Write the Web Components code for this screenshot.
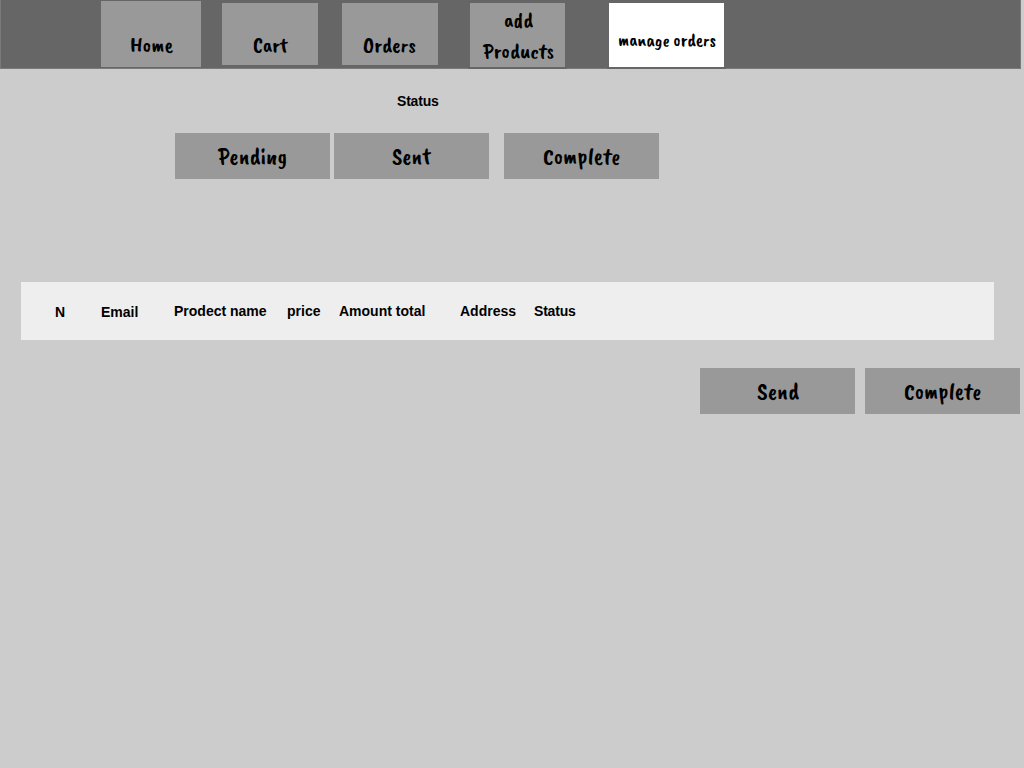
<!DOCTYPE html>
<html lang="en">
<head>
<meta charset="utf-8">
<title>Manage orders</title>
<style>
html,body{margin:0;height:100%;background:#ccc;overflow:hidden}
</style>
</head>
<body>
<orders-page></orders-page>
<script>
/* Brush-style caption fitted to a given width on a fixed baseline. */
class BrushLabel extends HTMLElement {
  connectedCallback() {
    const w = this.getAttribute('width'), size = this.getAttribute('size');
    const root = this.attachShadow({mode: 'open'});
    root.innerHTML = `<style>
      :host{display:block;flex:none}
      svg{display:block;overflow:visible}
      text{font-family:"Caveat Brush",Lato,sans-serif;font-weight:400;fill:#000}
    </style>
    <svg width="${w}" height="24"><text x="0" y="17" font-size="${size}" textLength="${w}" lengthAdjust="spacingAndGlyphs"></text></svg>`;
    root.querySelector('text').textContent = this.getAttribute('text');
  }
}
customElements.define('brush-label', BrushLabel);

class NavTab extends HTMLElement {
  connectedCallback() {
    this.attachShadow({mode: 'open'}).innerHTML = `<style>
      :host{display:flex;flex:none;flex-direction:column;align-items:flex-start;box-sizing:border-box;
        background:#999;cursor:pointer}
      :host([framed]){box-shadow:0 0 0 2px #666}
      :host([active]){background:#fff}
    </style><slot></slot>`;
  }
}
customElements.define('nav-tab', NavTab);

class ActionButton extends HTMLElement {
  connectedCallback() {
    this.attachShadow({mode: 'open'}).innerHTML = `<style>
      :host{display:flex;flex:none;box-sizing:border-box;width:155px;height:46px;padding-top:14px;
        background:#999;cursor:pointer}
    </style><slot></slot>`;
  }
}
customElements.define('action-button', ActionButton);

class TopNav extends HTMLElement {
  connectedCallback() {
    this.attachShadow({mode: 'open'}).innerHTML = `<style>
      :host{display:flex;align-items:flex-start;box-sizing:border-box;width:1021px;height:69px;
        background:#666;border:solid #7a7a7a;border-width:0 1px 1px}
      .home{margin:1px 0 0 100px;width:100px;height:66px;padding:34px 0 0 29px}
      .cart{margin:3px 0 0 21px;width:96px;height:62px;padding:32px 0 0 31px}
      .orders{margin:3px 0 0 24px;width:96px;height:62px;padding:32px 0 0 21px}
      .add{margin:3px 0 0 32px;width:95px;height:64px;padding:7px 0 0 13px;gap:7px}
      .add brush-label:first-child{margin-left:21px}
      .manage{margin:3px 0 0 44px;width:115px;height:64px;padding:26px 0 0 9px}
    </style>
    <nav-tab class="home"><brush-label text="Home" width="43" size="21"></brush-label></nav-tab>
    <nav-tab class="cart"><brush-label text="Cart" width="35" size="21"></brush-label></nav-tab>
    <nav-tab class="orders"><brush-label text="Orders" width="53" size="21"></brush-label></nav-tab>
    <nav-tab class="add" framed><brush-label text="add" width="29" size="21"></brush-label><brush-label text="Products" width="71" size="21"></brush-label></nav-tab>
    <nav-tab class="manage" framed active><brush-label text="manage orders" width="98" size="18"></brush-label></nav-tab>`;
  }
}
customElements.define('top-nav', TopNav);

class OrdersHeader extends HTMLElement {
  connectedCallback() {
    this.attachShadow({mode: 'open'}).innerHTML = `<style>
      :host{display:grid;grid-template-columns:46px 73px 113px 52px 121px 74px 1fr;box-sizing:border-box;
        width:973px;height:58px;padding:21px 0 0 34px;background:#eee;
        font:bold 14px/16px "Liberation Sans",Arial,sans-serif;color:#000;white-space:nowrap}
      .low{padding-top:1px}
      .tight{letter-spacing:-.2px}
    </style>
    <span class="low">N</span><span class="low">Email</span><span>Prodect name</span><span>price</span><span>Amount total</span><span>Address</span><span class="tight">Status</span>`;
  }
}
customElements.define('orders-header', OrdersHeader);

class OrdersPage extends HTMLElement {
  connectedCallback() {
    this.attachShadow({mode: 'open'}).innerHTML = `<style>
      :host{display:block;width:1024px;height:768px;background:#ccc}
      h2{margin:24px 0 0 397px;height:16px;font:bold 14px/16px "Liberation Sans",Arial,sans-serif;letter-spacing:-.2px;color:#000}
      .filters{display:flex;margin:24px 0 0 175px}
      .filters :nth-child(2){margin-left:4px}
      .filters :nth-child(3){margin-left:15px}
      orders-header{margin:103px 0 0 21px}
      .actions{display:flex;gap:10px;margin:28px 0 0 700px}
    </style>
    <top-nav></top-nav>
    <h2>Status</h2>
    <div class="filters">
      <action-button style="padding-left:43px"><brush-label text="Pending" width="69" size="24"></brush-label></action-button>
      <action-button style="padding-left:58px"><brush-label text="Sent" width="39" size="24"></brush-label></action-button>
      <action-button style="padding-left:39px"><brush-label text="Complete" width="77" size="24"></brush-label></action-button>
    </div>
    <orders-header></orders-header>
    <div class="actions">
      <action-button style="padding-left:57px"><brush-label text="Send" width="42" size="24"></brush-label></action-button>
      <action-button style="padding-left:39px"><brush-label text="Complete" width="77" size="24"></brush-label></action-button>
    </div>`;
  }
}
customElements.define('orders-page', OrdersPage);
</script>
</body>
</html>
